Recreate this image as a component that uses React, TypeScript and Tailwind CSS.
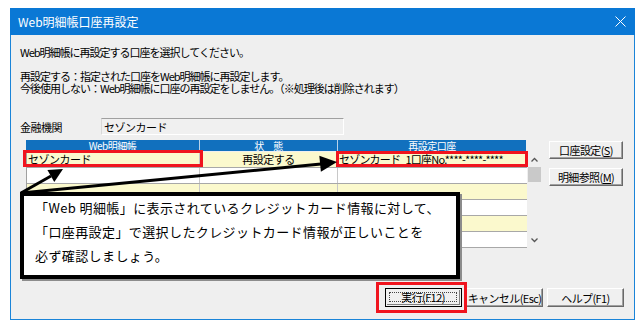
import React from "react";

function WinButton({ children, className = "" }: { children: React.ReactNode; className?: string }) {
  return (
    <div
      className={
        "flex items-center justify-center h-[18px] bg-[#f0f0f0] border-t border-l border-t-white border-l-white border-r border-b border-r-[#696969] border-b-[#696969] shadow-[inset_-1px_-1px_0_#a0a0a0] text-[11px] leading-[12px] tracking-[-0.6px] text-black whitespace-nowrap " +
        className
      }
    >
      {children}
    </div>
  );
}

const rows = [
  { c1: "セゾンカード", c2: "再設定する", c3: "セゾンカード_1口座No.****-****-****", yellow: true },
  { c1: "", c2: "", c3: "", yellow: false },
  { c1: "", c2: "", c3: "", yellow: true },
  { c1: "", c2: "", c3: "", yellow: false },
  { c1: "", c2: "", c3: "", yellow: true },
  { c1: "", c2: "", c3: "", yellow: false },
];

export default function App() {
  return (
    <div className="relative w-[642px] h-[329px] bg-white pt-[8px] pl-[10px] overflow-hidden font-['Noto_Sans_CJK_JP','Noto_Sans',sans-serif] text-black">
      <div className="w-[625px] h-[312px] flex flex-col">
        {/* Title bar */}
        <div className="h-[27px] bg-[#0a78d5] flex items-center justify-between pl-[8px] pr-[9px] text-white text-[12px] leading-[12px]">
          <span>Web明細帳口座再設定</span>
          <svg width="11" height="11" viewBox="0 0 11 11">
            <path d="M0.5 0.5 L10.5 10.5 M10.5 0.5 L0.5 10.5" stroke="white" strokeWidth="1" />
          </svg>
        </div>
        {/* Body */}
        <div className="flex-1 bg-[#efefef] border-x border-b border-[#1a84d8] pl-[9px] pt-[11px] flex flex-col">
          <div className="text-[11px] leading-[12px] tracking-[-1px] whitespace-nowrap">
            Web明細帳に再設定する口座を選択してください。
          </div>
          <div className="mt-[12px] text-[11px] leading-[12px] tracking-[-1px] whitespace-nowrap">
            再設定する：指定された口座をWeb明細帳に再設定します。
          </div>
          <div className="text-[11px] leading-[12px] tracking-[-1px] whitespace-nowrap">
            今後使用しない：Web明細帳に口座の再設定をしません。（※処理後は削除されます）
          </div>

          {/* 金融機関 */}
          <div className="mt-[24px] flex items-center h-[17px]">
            <div className="w-[81px] text-[11px] leading-[12px] tracking-[-0.5px]">金融機関</div>
            <div className="w-[243px] h-[17px] border-t border-l border-t-[#a0a0a0] border-l-[#d8d8d8] border-r border-b border-r-white border-b-white pl-[2px] text-[11px] leading-[16px] tracking-[-0.5px] bg-[#f0f0f0]">
              セゾンカード
            </div>
          </div>

          {/* Grid + side buttons */}
          <div className="mt-[5px] ml-[6px] flex items-start">
            <div className="w-[515px] flex flex-col">
              <div className="flex h-[11px] w-[500px] bg-[#1170be] text-white text-[10px] leading-[11px] tracking-[-0.5px]">
                <div className="w-[174px] text-center border-r border-[#b8d2ea]">Web明細帳</div>
                <div className="w-[138px] text-center border-r border-[#b8d2ea]">状　態</div>
                <div className="flex-1 text-center">再設定口座</div>
              </div>
              <div className="flex mt-[1px]">
                <div className="w-[501px] flex flex-col border-l border-[#a0a0a0]">
                  {rows.map((r, i) => (
                    <div
                      key={i}
                      className={
                        "flex h-[16px] border-b border-[#a8a8a8] text-[11px] leading-[14px] tracking-[-0.5px] " +
                        (r.yellow ? "bg-[#fbf9cd]" : "bg-white")
                      }
                    >
                      <div className="w-[173px] pl-[1px] border-r border-[#c8c8c8] whitespace-nowrap overflow-hidden">{r.c1}</div>
                      <div className="w-[138px] text-center border-r border-[#c8c8c8] whitespace-nowrap overflow-hidden">{r.c2}</div>
                      <div className="flex-1 pl-[1px] whitespace-nowrap overflow-x-hidden tracking-[-0.8px]">{r.c3}</div>
                    </div>
                  ))}
                </div>
                <div className="w-[14px] h-[96px] flex flex-col items-center bg-[#efefef]">
                  <svg width="9" height="14" viewBox="0 0 9 14" className="mt-[1px]">
                    <path d="M1.5 8.5 L4.5 5.5 L7.5 8.5" stroke="#555" strokeWidth="1.3" fill="none" />
                  </svg>
                  <div className="w-[13px] h-[15px] bg-[#c9c9c9]" />
                  <div className="flex-1" />
                  <svg width="9" height="14" viewBox="0 0 9 14" className="mb-[1px]">
                    <path d="M1.5 5.5 L4.5 8.5 L7.5 5.5" stroke="#555" strokeWidth="1.3" fill="none" />
                  </svg>
                </div>
              </div>
            </div>
            <div className="ml-[8px] mt-[1px] flex flex-col gap-[9px]">
              <WinButton className="w-[74px]">
                <span>口座設定(<span className="underline">S</span>)</span>
              </WinButton>
              <WinButton className="w-[74px]">
                <span>明細参照(<span className="underline">M</span>)</span>
              </WinButton>
            </div>
          </div>

          {/* Bottom buttons */}
          <div className="mt-[40px] flex justify-end gap-[4px] pr-[10px]">
            <div className="w-[77px] h-[19px] border border-black p-[1px] bg-[#f0f0f0]">
              <div className="w-full h-full flex items-center justify-center border-r border-b border-[#808080] p-[2px]">
                <div className="w-full h-full flex items-center justify-center border border-dotted border-[#444] text-[11px] leading-[11px] tracking-[-0.6px] whitespace-nowrap">
                  実行(F12)
                </div>
              </div>
            </div>
            <WinButton className="w-[77px] h-[19px]">キャンセル(Esc)</WinButton>
            <WinButton className="w-[77px] h-[19px]">ヘルプ(F1)</WinButton>
          </div>
        </div>
      </div>

      {/* Red highlight boxes */}
      <div className="absolute left-[23px] top-[150px] w-[180px] h-[17px] border-[3px] border-[#f0141e]" />
      <div className="absolute left-[336px] top-[151px] w-[192px] h-[16px] border-[3px] border-[#f0141e]" />
      <div className="absolute left-[376px] top-[282px] w-[91px] h-[31px] border-[3px] border-[#f0141e]" />

      {/* Arrows */}
      <svg className="absolute left-0 top-0" width="642" height="329" viewBox="0 0 642 329">
        <line x1="21" y1="193" x2="51" y2="176" stroke="black" strokeWidth="3" />
        <polygon points="63,169 54.3,182 47.4,169.9" fill="black" />
        <line x1="21" y1="193" x2="321" y2="164" stroke="black" strokeWidth="3" />
        <polygon points="337,162 320.9,171.7 319.3,155.8" fill="black" />
      </svg>

      {/* Callout */}
      <div className="absolute left-[20px] top-[192px] w-[440px] h-[87px] border-[4px] border-black bg-white shadow-[2px_2px_0_#8c8c8c] pl-[11px] text-[13px] leading-[24px] tracking-[0.4px] whitespace-nowrap">
        <div>「Web 明細帳」に表示されているクレジットカード情報に対して、</div>
        <div>「口座再設定」で選択したクレジットカード情報が正しいことを</div>
        <div>必ず確認しましょう。</div>
      </div>
    </div>
  );
}
